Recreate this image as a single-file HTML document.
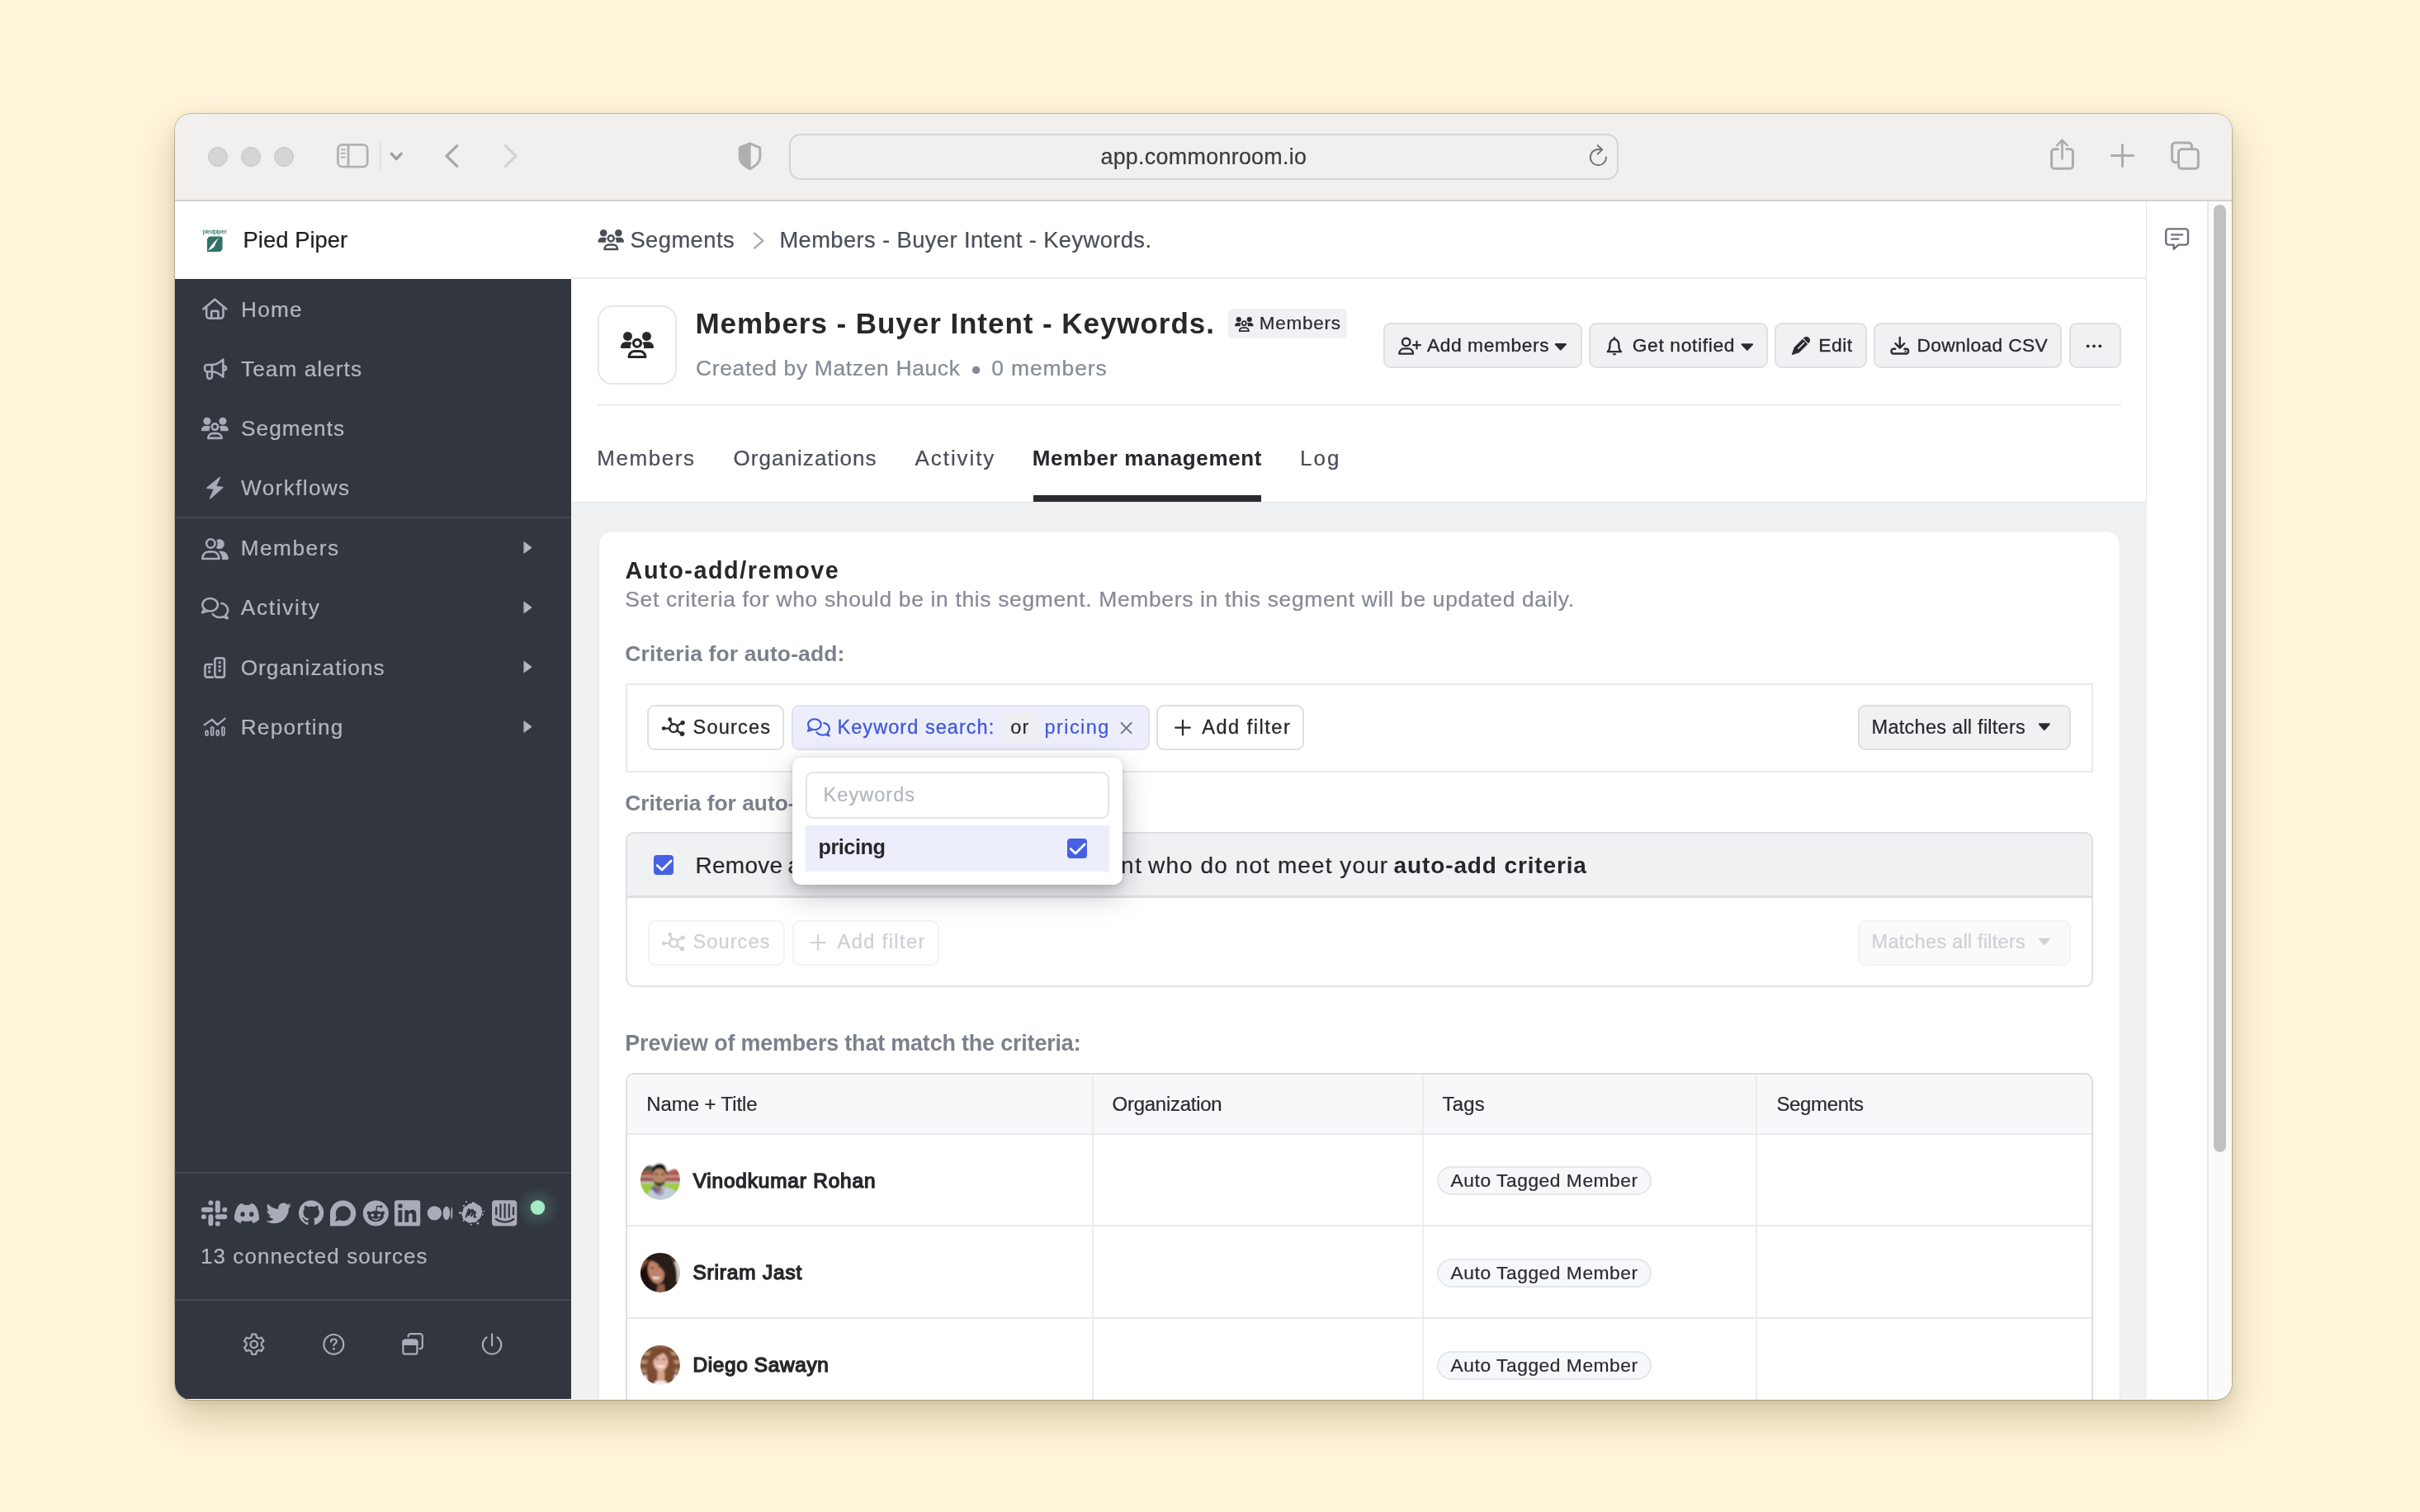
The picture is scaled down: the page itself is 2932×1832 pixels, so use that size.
<!DOCTYPE html>
<html lang="en">
<head>
<meta charset="utf-8">
<title>Members - Buyer Intent - Keywords. | Common Room</title>
<style>
*{box-sizing:border-box;margin:0;padding:0}
html,body{width:2932px;height:1832px;overflow:hidden}
body{background:#fef4d9;font-family:"Liberation Sans",sans-serif;position:relative}
.abs,.t,.win *{position:absolute}
.t{white-space:nowrap;line-height:1em}
.win{position:absolute;left:212px;top:138px;width:2492px;height:1557.5px;border-radius:20px;background:#fff;
 box-shadow:0 0 0 1px rgba(60,45,10,.26),0 22px 44px rgba(80,60,10,.24),0 3px 12px rgba(80,60,10,.10)}
.clip{left:0;top:0;width:2492px;height:1557.5px;border-radius:20px;overflow:hidden}
/* coordinates inside .clip are page coordinates shifted by (-212,-137): use .pg wrapper */
.pg{left:-212px;top:-138px;width:2932px;height:1832px;will-change:transform}
.titlebar{left:212px;top:137px;width:2492px;height:105px;background:#f1f0ee}
.tbline{left:212px;top:242px;width:2492px;height:2px;background:#d3d2d0}
.tl{width:24px;height:24px;border-radius:50%;background:#d6d5d3;border:1px solid #c4c3c1;top:178px}
.url{left:956px;top:162px;width:1005px;height:56px;border-radius:14px;border:2px solid #d6d5d3;background:#f1f0ee}
.sidebar{left:212px;top:338px;width:480px;height:1357px;background:#32363f}
.sdiv{left:212px;width:480px;height:2px;background:#454853}
.hline{background:#ececf0;height:2px}
.graybg{left:692px;top:608px;width:1909px;height:1087px;background:#f0f1f3;border-top:1.6px solid #e7e8ea}
.card{left:725px;top:643.4px;width:1844px;height:1100px;background:#fff;border-radius:16px;border:1.6px solid #e8e9eb}
.btn{height:55px;top:391px;border-radius:9px;background:#f0f1f3;border:2px solid #dedfe3}
.fbtn{height:55px;border-radius:9px;background:#fff;border:2px solid #dfe0e5}
.rail{left:2600.3px;top:244px;width:74px;height:1451px;background:#fff;border-left:1.6px solid #e3e4e8}
.track{left:2674px;top:244px;width:30px;height:1451px;background:#fafafa;border-left:2px solid #e8e8e8}
.thumb{left:2682px;top:248px;width:15px;height:1148px;border-radius:8px;background:#c1c1c1}
.tag{height:35px;border-radius:18px;background:#f7f8fa;border:2px solid #e5e6ea;left:1741px;width:260px}
.av{width:48px;height:48px;border-radius:50%;overflow:hidden;left:776px}
svg{position:absolute;overflow:visible}
</style>
</head>
<body>
<div class="win"><div class="clip"><div class="pg">

<!-- ======= Safari title bar ======= -->
<header class="titlebar"></header>
<div class="tbline"></div>
<div class="tl" style="left:252px"></div>
<div class="tl" style="left:292px"></div>
<div class="tl" style="left:332px"></div>
<div class="url"></div>
<svg style="left:0;top:0" width="2932" height="300" viewBox="0 0 2932 300" fill="none" stroke-linecap="round" stroke-linejoin="round">
  <!-- sidebar toggle -->
  <g stroke="#b3b2b0" stroke-width="2.8">
    <rect x="409.4" y="175.4" width="35.8" height="26.8" rx="5.5"/>
    <path d="M422 175.5V202" stroke-linecap="butt"/>
    <path d="M413.6 181.2h4.2M413.6 185.8h4.2M413.6 190.4h4.2" stroke-width="2"/>
  </g>
  <path d="M460.7 172V207.5" stroke="#dcdbd9" stroke-width="1.6"/>
  <path d="M474.2 186.2l6 6.4 6-6.4" stroke="#9c9b99" stroke-width="3.2"/>
  <path d="M553.8 176.6L541 189l12.8 12.4" stroke="#a9a8a6" stroke-width="3.2"/>
  <path d="M612.4 176.6L625.2 189l-12.8 12.4" stroke="#d4d3d1" stroke-width="3.2"/>
  <!-- shield -->
  <path d="M908.5 172.6c.6 0 1.2.1 1.8.4l9.9 4c1.3.5 2.1 1.7 2.1 3.1v9.600c0 7.600-5.800 12.200-12.600 16-.8.4-1.600.4-2.400 0-6.800-3.800-12.600-8.400-12.600-16v-9.600c0-1.400.8-2.600 2.100-3.100l9.900-4c.6-.3 1.200-.4 1.800-.4z" fill="#b0afad" stroke="none"/>
  <path d="M909.700 176.100l9.600 3.900v9.800c0 5.600-4.200 9.400-9.600 12.700z" fill="#f1f0ee" stroke="none"/>
  <!-- reload -->
  <g stroke="#757472" stroke-width="2">
    <path d="M1946 190.600a9.600 9.600 0 1 1-9.600-9.600h4.200"/>
    <path d="M1935.600 176.200l5.600 5-5.600 5.400"/>
  </g>
  <!-- share -->
  <g stroke="#adacaa" stroke-width="3">
    <path d="M2493.400 180.800h-4.600a3.200 3.200 0 0 0-3.200 3.200v17a3.200 3.200 0 0 0 3.200 3.200h19.400a3.200 3.200 0 0 0 3.200-3.200v-17a3.200 3.200 0 0 0-3.200-3.200h-4.600"/>
    <path d="M2498.500 192.400v-22.600M2492.300 176.200l6.200-6.400 6.200 6.400" stroke-width="2.600"/>
  </g>
  <!-- plus -->
  <path d="M2558.400 188.400h26.200M2571.500 175.400v26.200" stroke="#adacaa" stroke-width="3"/>
  <!-- tabs -->
  <g stroke="#adacaa" stroke-width="3">
    <path d="M2638 196.800h-2.600a3.800 3.800 0 0 1-3.800-3.800v-16.200a3.800 3.800 0 0 1 3.800-3.800h16.200a3.800 3.800 0 0 1 3.800 3.800v2.800"/>
    <rect x="2639.500" y="180.800" width="23.800" height="23.400" rx="3.800"/>
  </g>
</svg>


<!-- ======= App header ======= -->
<div class="hline" style="left:692px;top:336px;width:1909px"></div>
<div class="rail"></div>
<div class="track"></div>
<div class="thumb"></div>

<!-- ======= Sidebar ======= -->
<nav class="sidebar"></nav>
<div class="sdiv" style="top:626px"></div>
<div class="sdiv" style="top:1420px"></div>
<div class="sdiv" style="top:1574px"></div>
<svg style="left:0;top:0" width="2932" height="1832" viewBox="0 0 2932 1832" fill="none" stroke-linecap="round" stroke-linejoin="round">

<g stroke="#a9acb8" stroke-width="2.6">
<path d="M246.300 374.500L260.300 362.700l14 11.800"/>
<path d="M250.100 372.300V382.200a3.600 3.600 0 0 0 3.600 3.600h13.200a3.600 3.600 0 0 0 3.600-3.600V372.300"/>
<path d="M256.200 385.600V378.200a1.300 1.300 0 0 1 1.300-1.300h5.600a1.300 1.300 0 0 1 1.300 1.300V385.600"/>
<path d="M270.300 435.600c-4.200 3.800-8.200 6.400-13.300 6.400h-6.200a2.700 2.700 0 0 0-2.700 2.700v2.800a2.700 2.700 0 0 0 2.700 2.700h6.200c5.100 0 9.100 2.600 13.300 6.400z"/>
<path d="M256.900 442V450.200M251.100 450.400V456a2.900 2.900 0 0 0 5.800 0V450.400"/>
<path d="M271.500 443.600a2.500 2.500 0 0 1 0 5"/>
</g>
<g transform="translate(243.900 505.700) scale(1.0000 1.0000)" fill="none"><circle cx="7" cy="4.500" r="4.500" fill="#a9acb8"/><circle cx="26" cy="4.500" r="4.500" fill="#a9acb8"/><path d="M0 15.400C0 12.300 2.400 10.200 5.300 10.200H8.200c1.300 0 2.300.4 3.100 1-1.300 1.400-1.900 3.200-1.400 5.300H1.100A1.100 1.100 0 0 1 0 15.400z" fill="#a9acb8"/><path d="M33 15.400C33 12.300 30.600 10.200 27.700 10.200H24.800c-1.300 0-2.300.4-3.100 1 1.300 1.400 1.900 3.200 1.400 5.300h8.800A1.100 1.100 0 0 0 33 15.400z" fill="#a9acb8"/><circle cx="16.500" cy="11.400" r="3.700" stroke="#a9acb8" stroke-width="2.600"/><path d="M8.300 25.200c0-3.600 2.800-5.800 5.900-5.800h4.600c3.100 0 5.900 2.200 5.900 5.800z" stroke="#a9acb8" stroke-width="2.600" stroke-linejoin="round"/></g>
<path d="M266.200 578.600L250.800 591.300l8.800 1-4.800 11.300 15-13.100-8.600-1z" fill="#a9acb8" stroke="#a9acb8" stroke-width="1.600"/>
<circle cx="265.800" cy="659.300" r="6" fill="#a9acb8"/>
<circle cx="255.300" cy="658.500" r="8.300" fill="#32363f"/>
<path d="M264.600 667.800c1.300-.1 2.600-.1 3.900-.1 4.600 0 8.200 3.800 8.200 9.200a1.400 1.400 0 0 1-1.400 1.400h-6.300c.5-4.200-1.200-7.800-4.400-10.500z" fill="#a9acb8"/>
<circle cx="255.300" cy="658.500" r="5.200" stroke="#a9acb8" stroke-width="2.600"/>
<path d="M245.200 677c0-5 3.300-8.500 7.300-8.500h5.700c4 0 7.300 3.500 7.300 8.500z" stroke="#a9acb8" stroke-width="2.600" fill="#32363f"/>
<g stroke="#a9acb8" stroke-width="2.500">
<ellipse cx="254.600" cy="732.800" rx="9.300" ry="7.800"/>
<path d="M247.300 738.200L245 742.400l5.400-1.600" fill="#32363f"/>
<path d="M268.200 730.900A9.500 8.500 0 0 1 273.200 745.300M270 747.300A9.700 8.500 0 0 1 257.600 744"/>
<path d="M273.200 745.300L275.800 749.300l-5.800-2"/>
</g>
<g stroke="#a9acb8" stroke-width="2.600">
<rect x="260.400" y="797.400" width="11.500" height="23.200" rx="2.600"/>
<path d="M256.800 805h-6a2.400 2.400 0 0 0-2.400 2.400v10.800a2.400 2.400 0 0 0 2.400 2.400h7"/>
</g>
<rect x="264.6" y="801.2" width="3.100" height="3.100" rx=".6" fill="#a9acb8"/>
<rect x="264.6" y="806.1" width="3.100" height="3.100" rx=".6" fill="#a9acb8"/>
<rect x="264.6" y="811" width="3.100" height="3.100" rx=".6" fill="#a9acb8"/>
<rect x="252.2" y="807.5" width="3.100" height="3.100" rx=".6" fill="#a9acb8"/>
<rect x="252.2" y="812.3" width="3.100" height="3.100" rx=".6" fill="#a9acb8"/>
<path d="M247.700 878.300l9.200-6.400 6.500 6.200 9.200-7.400" stroke="#a9acb8" stroke-width="2.300"/>
<rect x="249.1" y="885.5" width="2.800" height="5.6" rx="1.400" stroke="#a9acb8" stroke-width="1.800"/>
<rect x="255.7" y="880.9" width="2.800" height="10.2" rx="1.400" stroke="#a9acb8" stroke-width="1.800"/>
<rect x="262.3" y="885" width="2.800" height="6.1" rx="1.400" stroke="#a9acb8" stroke-width="1.800"/>
<rect x="269" y="880.9" width="2.800" height="10.2" rx="1.400" stroke="#a9acb8" stroke-width="1.800"/>
<path d="M635.200 656.9L644 663.5l-8.800 6.600z" fill="#b3b6c0" stroke="#b3b6c0" stroke-width="1"/>
<path d="M635.200 729.4L644 736l-8.800 6.600z" fill="#b3b6c0" stroke="#b3b6c0" stroke-width="1"/>
<path d="M635.200 801.4L644 808l-8.800 6.600z" fill="#b3b6c0" stroke="#b3b6c0" stroke-width="1"/>
<path d="M635.200 873.9L644 880.5l-8.800 6.600z" fill="#b3b6c0" stroke="#b3b6c0" stroke-width="1"/>
<g fill="#a9acb8">
<rect x="260.8" y="1454.4" width="6.0" height="15.3" rx="3.0"/>
<rect x="252.4" y="1454.4" width="5.9" height="5.9" rx="2.9"/>
<rect x="243.9" y="1462.8" width="14.4" height="6.0" rx="3.0"/>
<rect x="243.9" y="1471.2" width="6.0" height="6.0" rx="3.0"/>
<rect x="252.4" y="1471.2" width="5.9" height="14.4" rx="3.0"/>
<rect x="260.8" y="1479.7" width="6.0" height="5.9" rx="2.9"/>
<rect x="260.8" y="1471.2" width="14.4" height="6.0" rx="3.0"/>
<rect x="269.2" y="1462.8" width="6.0" height="6.0" rx="3.0"/>
<path d="M291.500 1458.400c2.200-.300 3.800.6 4.600 1.800 2-.300 3.800-.300 5.800 0 .8-1.200 2.400-2.100 4.600-1.800 4.500 2.200 7.300 9.400 7.600 18.600-1.800 2.600-4.600 4.300-7.400 5.200l-1.900-3.100c-3.800 1.300-7.800 1.300-11.600 0l-1.900 3.100c-2.800-.9-5.600-2.600-7.400-5.200.3-9.200 3.100-16.400 7.600-18.600z"/>
<ellipse cx="294" cy="1471.300" rx="2.700" ry="3" fill="#32363f"/><ellipse cx="304.700" cy="1471.300" rx="2.700" ry="3" fill="#32363f"/>
<path transform="translate(322.300 1454.600) scale(.0598)" d="M459.370 151.716c.325 4.548.325 9.097.325 13.645 0 138.720-105.583 298.558-298.558 298.558-59.452 0-114.680-17.219-161.137-47.106 8.447.974 16.568 1.299 25.340 1.299 49.055 0 94.213-16.568 130.274-44.832-46.132-.975-84.792-31.188-98.112-72.772 6.498.974 12.995 1.624 19.818 1.624 9.421 0 18.843-1.300 27.614-3.573-48.081-9.747-84.143-51.980-84.143-102.985v-1.299c13.969 7.797 30.214 12.670 47.431 13.319-28.264-18.843-46.781-51.005-46.781-87.391 0-19.492 5.197-37.360 14.294-52.954 51.655 63.675 129.300 105.258 216.365 109.807-1.624-7.797-2.599-15.918-2.599-24.040 0-57.828 46.782-104.934 104.934-104.934 30.213 0 57.502 12.670 76.670 33.137 23.715-4.548 46.456-13.320 66.599-25.340-7.798 24.366-24.366 44.833-46.132 57.827 21.117-2.273 41.584-8.122 60.426-16.243-14.292 20.791-32.161 39.308-52.628 54.253z"/>
<path transform="translate(361.900 1454.400) scale(1.900)" d="M8 0C3.580 0 0 3.580 0 8c0 3.540 2.290 6.530 5.470 7.590.400.070.550-.170.550-.380 0-.190-.010-.820-.010-1.490-2.010.370-2.530-.490-2.690-.940-.090-.230-.480-.940-.820-1.130-.280-.150-.680-.520-.010-.530.630-.010 1.080.580 1.230.820.720 1.210 1.870.870 2.330.660.070-.520.280-.870.510-1.070-1.780-.200-3.640-.890-3.640-3.950 0-.870.310-1.590.820-2.150-.080-.200-.360-1.020.080-2.120 0 0 .670-.210 2.200.820.640-.180 1.320-.270 2-.270.680 0 1.360.090 2 .270 1.530-1.040 2.200-.820 2.200-.820.440 1.100.160 1.920.080 2.120.510.560.820 1.270.820 2.150 0 3.070-1.870 3.750-3.650 3.950.290.250.540.730.540 1.480 0 1.070-.010 1.930-.010 2.200 0 .210.150.460.550.380A8.013 8.013 0 0 0 16 8c0-4.420-3.580-8-8-8z"/>
<path d="M415.600 1454.400a15.500 15.500 0 0 1 0 31.200H400V1470a15.600 15.600 0 0 1 15.600-15.600z"/>
<path d="M416 1461.200a9 9 0 1 1-4.200 17l-5.800 1.700 1.700-5.600A9 9 0 0 1 416 1461.200z" fill="#32363f"/>
<circle cx="455.300" cy="1470" r="15.500"/>
<g fill="#32363f"><ellipse cx="455.300" cy="1473.600" rx="9.600" ry="6.600"/><circle cx="446.800" cy="1469.800" r="2.300"/><circle cx="463.800" cy="1469.800" r="2.300"/><circle cx="461.800" cy="1462" r="1.700"/></g>
<path d="M455.500 1467.500l1.400-6.200 4.800 1" stroke="#32363f" stroke-width="1.300" fill="none"/>
<circle cx="451.300" cy="1472.300" r="1.900"/><circle cx="459.300" cy="1472.300" r="1.900"/>
<path d="M451.300 1476.300c2.400 1.700 5.600 1.700 8 0" stroke="#a9acb8" stroke-width="1.300" fill="none"/>
<rect x="477.900" y="1454.300" width="31.300" height="31.300" rx="3.200"/>
<g fill="#32363f"><circle cx="484.900" cy="1461.200" r="2.750"/><rect x="482.500" y="1466.300" width="4.800" height="14.500"/><path d="M490.300 1466.300h4.600v2c.9-1.500 2.600-2.500 4.800-2.500 3.600 0 4.600 2.400 4.600 5.900v9.100h-4.800v-8c0-1.700-.4-2.900-2-2.900-1.700 0-2.400 1.200-2.400 2.900v8h-4.800z"/></g>
<circle cx="526.400" cy="1469.900" r="8.650"/><ellipse cx="540.900" cy="1470" rx="4.300" ry="8.200"/><ellipse cx="547.300" cy="1470" rx="1" ry="7.500"/>
<path transform="translate(571.2 1470.3) scale(1.08) translate(-571.2 -1470.3)" d="M571 1459c2.600-1.300 5.600-.6 7.200 1.500 2.300.2 4 2.100 3.800 4.400 1.700 1.800 1.800 4.600.2 6.400.3 2.600-1.200 5-3.600 5.800-1 2.600-3.800 3.900-6.400 3.100-2.400 1.300-5.400.7-7-1.400-2.500-.2-4.300-2.500-3.900-5-1.600-1.900-1.400-4.700.4-6.300-.2-2.600 1.500-4.900 4-5.500 1-1.800 3.200-3 5.300-3z"/>
<circle cx="565" cy="1456.2" r="1.1"/>
<circle cx="573.4" cy="1457.4" r="1.5"/>
<circle cx="562" cy="1461" r="1.2"/>
<circle cx="557.5" cy="1469.4" r="1.5"/>
<circle cx="582.6" cy="1464" r="1.2"/>
<circle cx="586.2" cy="1467.6" r="0.8"/>
<circle cx="584.6" cy="1471.6" r="1.1"/>
<circle cx="561.5" cy="1479.2" r="0.9"/>
<circle cx="570.6" cy="1483.8" r="1.1"/>
<circle cx="579" cy="1482.2" r="1.4"/>
<path d="M564.600 1474.400l3-8.400c.4-1 1.700-.700 1.500.4l-1.500 6 3.800-6c.6-.9 1.900-.4 1.600.6l-1.900 6.200 3-4.800c.7-1 2-.4 1.700.7l-1.200 4.300c-.3 1.200.6 1.600 1.700 1.200" stroke="#32363f" stroke-width="2.100" fill="none"/>
<rect x="596" y="1454.300" width="30.300" height="31.300" rx="4"/>
<g stroke="#32363f" stroke-width="2.200" fill="none"><path d="M601.200 1463v8.500M606.400 1459.600v15M611.600 1459v16.200M616.800 1459.600v15M622 1463v8.500"/><path d="M600.800 1477c6.400 4.800 15.200 4.800 21.600 0"/></g>
</g>
<circle cx="651.500" cy="1463" r="26" fill="url(#glow)"/>
<defs><radialGradient id="glow"><stop offset="0" stop-color="#8be0b0" stop-opacity=".30"/><stop offset=".4" stop-color="#7fd8a8" stop-opacity=".15"/><stop offset="1" stop-color="#7fd8a8" stop-opacity="0"/></radialGradient></defs>
<circle cx="651.500" cy="1463" r="8.700" fill="#a0ecc3"/>
<g stroke="#a9acb8" stroke-width="2.200">
<path d="M304.5 1620.2 L305.3 1616.7 L310.1 1616.7 L310.9 1620.2 L313.5 1621.7 L316.9 1620.7 L319.4 1624.9 L316.8 1627.3 L316.8 1630.3 L319.4 1632.7 L316.9 1636.9 L313.5 1635.9 L310.9 1637.4 L310.1 1640.9 L305.3 1640.9 L304.5 1637.4 L301.9 1635.9 L298.5 1636.9 L296.0 1632.7 L298.6 1630.3 L298.6 1627.3 L296.0 1624.9 L298.5 1620.7 L301.9 1621.7Z" stroke-linejoin="round"/>
<circle cx="307.7" cy="1628.8" r="4.200"/>
<circle cx="404.300" cy="1628.900" r="11.900"/>
<path d="M400.900 1625.700c0-2 1.500-3.200 3.500-3.200s3.400 1.200 3.400 2.900c0 2.600-3.400 2.500-3.400 5.100" stroke-width="2.100"/>
<circle cx="404.400" cy="1634.400" r="1.400" fill="#a9acb8" stroke="none"/>
<path d="M494.600 1619.400v-.4a2.800 2.800 0 0 1 2.800-2.800h11.600a2.800 2.800 0 0 1 2.800 2.800v12.400a2.800 2.800 0 0 1-2.800 2.800h-.6"/>
<rect x="488.400" y="1623.700" width="17" height="17" rx="2.800"/>
<path d="M488.400 1629V1626.500a2.800 2.800 0 0 1 2.800-2.800h11.400a2.800 2.800 0 0 1 2.800 2.800V1629z" fill="#a9acb8"/>
<path d="M596.100 1616.600v13.600M589.600 1620.300a11.200 11.200 0 1 0 13 0"/>
</g>
</svg>

<!-- ======= Page header ======= -->
<div style="left:724px;top:370px;width:96px;height:96px;border-radius:18px;border:2px solid #e7e7ea;background:#fff"></div>
<div style="left:1488px;top:374px;width:144px;height:36px;border-radius:5px;background:#f0f1f3"></div>
<div class="btn" style="left:1676px;width:241px"></div>
<div class="btn" style="left:1925px;width:217px"></div>
<div class="btn" style="left:2150px;width:112px"></div>
<div class="btn" style="left:2270px;width:228px"></div>
<div class="btn" style="left:2507px;width:63px"></div>
<div class="hline" style="left:724px;top:490px;width:1846px"></div>
<div style="left:1252px;top:600px;width:276px;height:8px;background:#2a2b2f"></div>
<svg style="left:0;top:0" width="2932" height="700" viewBox="0 0 2932 700" fill="none" stroke-linecap="round" stroke-linejoin="round">
<path d="M255.400 286.400H268a1.500 1.500 0 0 1 1.500 1.500V300.600a4.500 4.500 0 0 1-4.500 4.500H251.400a.5.500 0 0 1-.5-.5V290.900a4.500 4.500 0 0 1 4.500-4.500z" fill="#2f7168"/>
<path d="M252 303.600C255.500 298 260 291.500 266.400 287.500 262.500 291 261.600 294 260.600 297 259.600 300 256.500 301.800 252 303.600z" fill="#fff"/>
<circle cx="1182.600" cy="448.400" r="4.700" fill="#868a97"/>
<g transform="translate(724.500 278) scale(0.9545 0.9556)" fill="none"><circle cx="7" cy="4.500" r="4.500" fill="#4b4e59"/><circle cx="26" cy="4.500" r="4.500" fill="#4b4e59"/><path d="M0 15.400C0 12.300 2.400 10.200 5.300 10.200H8.200c1.300 0 2.300.4 3.100 1-1.300 1.400-1.900 3.200-1.400 5.300H1.100A1.100 1.100 0 0 1 0 15.400z" fill="#4b4e59"/><path d="M33 15.400C33 12.300 30.600 10.200 27.700 10.200H24.800c-1.300 0-2.300.4-3.100 1 1.300 1.400 1.900 3.200 1.400 5.300h8.800A1.100 1.100 0 0 0 33 15.400z" fill="#4b4e59"/><circle cx="16.500" cy="11.400" r="3.700" stroke="#4b4e59" stroke-width="2.600"/><path d="M8.300 25.200c0-3.600 2.800-5.800 5.900-5.800h4.600c3.100 0 5.900 2.200 5.900 5.800z" stroke="#4b4e59" stroke-width="2.600" stroke-linejoin="round"/></g>
<path d="M914 282.600l10.400 9-10.400 9" stroke="#a3a6b2" stroke-width="2.200"/>
<path d="M2627.400 277.400h20.400a3.200 3.200 0 0 1 3.200 3.200v12.800a3.200 3.200 0 0 1-3.200 3.200h-8.600l-5.600 5.200v-5.200h-6.200a3.200 3.200 0 0 1-3.200-3.200v-12.800a3.200 3.200 0 0 1 3.200-3.200z" stroke="#6d717e" stroke-width="2.400"/>
<path d="M2631 284.400h13.200M2631 289.600h8.400" stroke="#6d717e" stroke-width="2.200"/>
<g transform="translate(752 402) scale(1.2121 1.2111)" fill="none"><circle cx="7" cy="4.500" r="4.500" fill="#27282b"/><circle cx="26" cy="4.500" r="4.500" fill="#27282b"/><path d="M0 15.400C0 12.300 2.400 10.200 5.300 10.200H8.200c1.300 0 2.300.4 3.100 1-1.300 1.400-1.900 3.200-1.400 5.300H1.100A1.100 1.100 0 0 1 0 15.400z" fill="#27282b"/><path d="M33 15.400C33 12.300 30.600 10.200 27.700 10.200H24.800c-1.300 0-2.300.4-3.100 1 1.300 1.400 1.900 3.200 1.400 5.300h8.800A1.100 1.100 0 0 0 33 15.400z" fill="#27282b"/><circle cx="16.500" cy="11.400" r="3.700" stroke="#27282b" stroke-width="2.600"/><path d="M8.300 25.200c0-3.600 2.800-5.800 5.900-5.800h4.600c3.100 0 5.900 2.200 5.900 5.800z" stroke="#27282b" stroke-width="2.600" stroke-linejoin="round"/></g>
<g transform="translate(1496 383.900) scale(0.6848 0.6852)" fill="none"><circle cx="7" cy="4.500" r="4.500" fill="#2b2c30"/><circle cx="26" cy="4.500" r="4.500" fill="#2b2c30"/><path d="M0 15.400C0 12.300 2.400 10.200 5.300 10.200H8.200c1.300 0 2.300.4 3.100 1-1.300 1.400-1.900 3.200-1.400 5.300H1.100A1.100 1.100 0 0 1 0 15.400z" fill="#2b2c30"/><path d="M33 15.400C33 12.300 30.600 10.200 27.700 10.200H24.800c-1.300 0-2.300.4-3.100 1 1.300 1.400 1.900 3.200 1.400 5.300h8.800A1.100 1.100 0 0 0 33 15.400z" fill="#2b2c30"/><circle cx="16.500" cy="11.400" r="3.700" stroke="#2b2c30" stroke-width="2.600"/><path d="M8.300 25.200c0-3.600 2.800-5.800 5.900-5.800h4.600c3.100 0 5.900 2.200 5.900 5.800z" stroke="#2b2c30" stroke-width="2.600" stroke-linejoin="round"/></g>
<g stroke="#2b2c30" stroke-width="2.400"><circle cx="1703.700" cy="414.400" r="4.700"/><path d="M1695.400 428.600c0-4 2.900-6.200 5.900-6.200h4.800c3 0 5.900 2.200 5.900 6.200z"/><path d="M1716.500 413.700v8.800M1712.100 418.100h8.800" stroke-width="2.200"/></g>
<path d="M1884.8 417.1H1896.9L1890.8 423.6z" fill="#2b2c30" stroke="#2b2c30" stroke-width="2" stroke-linejoin="round"/>
<g stroke="#2b2c30" stroke-width="2.300"><path d="M1955.900 409.200v1.800"/><path d="M1947.800 426.200c1.800-1.700 2.700-3.700 2.700-7.200v-1.400c0-3.700 2.400-6.400 5.400-6.400s5.400 2.700 5.400 6.400v1.400c0 3.500.9 5.500 2.700 7.200z"/></g>
<path d="M1953.700 428.300a2.200 2.200 0 0 0 4.400 0z" fill="#2b2c30"/>
<path d="M2110.6 417.3H2123.1L2116.9 423.7z" fill="#2b2c30" stroke="#2b2c30" stroke-width="2" stroke-linejoin="round"/>
<g transform="translate(2171.300 429.600) rotate(-45)"><path d="M0 0L8 -3.900H24.500a3.900 3.900 0 0 1 0 7.800H8z" fill="#2b2c30" stroke="#2b2c30" stroke-width="1"/><path d="M10.500 0H20" stroke="#f0f1f3" stroke-width="1.500"/><path d="M22.800 -4.600V4.600" stroke="#f0f1f3" stroke-width="1.100"/></g>
<g stroke="#2b2c30" stroke-width="2.400"><path d="M2301.800 409v12.400M2296.400 416.200l5.400 5.400 5.400-5.400"/><path d="M2296.200 422.800h-2.300a2.300 2.300 0 0 0-2.300 2.300v1.100a2.300 2.300 0 0 0 2.300 2.300h15.800a2.300 2.300 0 0 0 2.300-2.300v-1.100a2.300 2.300 0 0 0-2.300-2.300h-2.300"/></g>
<circle cx="2308.600" cy="425.700" r="1.100" fill="#2b2c30"/>
<circle cx="2529.7" cy="419.300" r="1.900" fill="#2b2c30"/>
<circle cx="2537" cy="419.300" r="1.900" fill="#2b2c30"/>
<circle cx="2544.3" cy="419.300" r="1.900" fill="#2b2c30"/>
</svg>

<!-- ======= Content ======= -->
<main class="graybg"></main>
<section class="card"></section>
<!-- criteria box 1 -->
<div style="left:758px;top:828px;width:1778px;height:108px;border:2px solid #e8e9ec;background:#fff"></div>
<div class="fbtn" style="left:784.3px;top:854.3px;width:166.2px"></div>
<div class="fbtn" style="left:959.4px;top:854.3px;width:433.3px;background:#eceefb;border-color:#dfe2f4"></div>
<div style="left:1214px;top:865px;width:44px;height:35px;border-radius:7px;background:#eeeff1"></div>
<div class="fbtn" style="left:1401.4px;top:854.3px;width:178.9px"></div>
<div class="fbtn" style="left:2250.6px;top:854.3px;width:258.8px;background:#f0f1f3;border-color:#dddee2"></div>
<!-- criteria box 2 -->
<div style="left:758px;top:1008px;width:1778px;height:188px;border:2px solid #e0e1e5;background:#fff;border-radius:10px"></div>
<div style="left:758px;top:1008px;width:1778px;height:80px;border:2px solid #dfe0e4;background:#f0f1f3;border-radius:10px 10px 0 0;border-bottom:3px solid #dfe0e4"></div>
<div style="left:792px;top:1036px;width:24px;height:24px;border-radius:4px;background:#4760e4"></div>
<div class="fbtn" style="left:785.3px;top:1114.7px;width:165.4px;border-color:#f3f3f5"></div>
<div class="fbtn" style="left:960.3px;top:1114.7px;width:177.3px;border-color:#f3f3f5"></div>
<div class="fbtn" style="left:2250.6px;top:1114.7px;width:258.8px;background:#fafafb;border-color:#f3f3f5"></div>
<!-- table -->
<div style="left:758px;top:1300px;width:1778px;height:500px;border:2px solid #dddee2;border-radius:10px;background:#fff;overflow:hidden">
  <div style="left:0;top:0;width:1778px;height:71px;background:#f7f8fa"></div>
  <div style="left:0;top:71px;width:1778px;height:2px;background:#e9eaed"></div>
  <div style="left:0;top:182px;width:1778px;height:2px;background:#e9eaed"></div>
  <div style="left:0;top:294px;width:1778px;height:2px;background:#e9eaed"></div>
  <div style="left:562.7px;top:0;width:2px;height:500px;background:#ececef"></div>
  <div style="left:962.6px;top:0;width:2px;height:500px;background:#ececef"></div>
  <div style="left:1366.6px;top:0;width:2px;height:500px;background:#ececef"></div>
</div>
<div class="tag" style="top:1413px"></div>
<div class="tag" style="top:1525px"></div>
<div class="tag" style="top:1637px"></div>
<svg style="left:0;top:0" width="2932" height="1832" viewBox="0 0 2932 1832">
<defs>
<filter id="bl" x="-10%" y="-10%" width="120%" height="120%"><feGaussianBlur stdDeviation="0.9"/></filter>
<clipPath id="a1"><circle cx="799.900" cy="1429.900" r="24"/></clipPath>
<clipPath id="a2"><circle cx="799.900" cy="1541.900" r="24"/></clipPath>
<clipPath id="a3"><circle cx="799.900" cy="1653.900" r="24"/></clipPath>
</defs>
<!-- avatar 1 : man in front of lawn and brick buildings -->
<g clip-path="url(#a1)"><g filter="url(#bl)">
<rect x="774" y="1404" width="52" height="52" fill="#ffffff"/>
<path d="M776 1421c3-6 6-9 10-9s6 1 8 3l2 6z" fill="#4d5b4c"/>
<rect x="774" y="1419" width="52" height="14" fill="#a4564c"/>
<path d="M808 1420l6-3 5-1 5 4v13h-16z" fill="#b25c50"/>
<rect x="774" y="1424.500" width="52" height="1.600" fill="#d9c6c0" opacity=".8"/>
<rect x="774" y="1428.800" width="52" height="1.400" fill="#7c6a70" opacity=".7"/>
<rect x="774" y="1431.600" width="52" height="2.600" fill="#c9cccb"/>
<rect x="774" y="1433.800" width="52" height="14" fill="#9dcc3e"/>
<path d="M781 1456c1-9 5-13 11-15l6-4 8 1c7 2 13 4 16 9l2 9z" fill="#c3ccd8"/>
<path d="M788.500 1439.500l4-3.500 4 4 1.500 8-4-2.500z" fill="#6d5fa0"/>
<path d="M805.500 1436.500l-3 5.500-5.500 8 6-3.500z" fill="#8f86bd"/>
<path d="M795.500 1438l3 9 4-8z" fill="#9a6a50"/>
<ellipse cx="798.800" cy="1424.800" rx="8.300" ry="11.600" fill="#b98967"/>
<path d="M790.200 1424c-1.200-9.500 2.800-14.200 8.800-14.200s10 4.600 8.200 14c-1.600-5.400-4.200-8-8.400-8s-6.800 2.400-8.600 8.200z" fill="#17130f"/>
<path d="M791 1429.500c1.400 6 4.600 8.600 7.800 8.600s6.600-2.600 7.800-8.600c-2.200 2.800-4.600 3.400-7.800 3.400s-5.400-.6-7.800-3.400z" fill="#4d3b31"/>
<ellipse cx="795.200" cy="1422.800" rx="1.900" ry="1" fill="#3a2a22"/><ellipse cx="802.600" cy="1422.800" rx="1.900" ry="1" fill="#3a2a22"/>
</g></g>
<!-- avatar 2 : woman, long dark hair, head tilted -->
<g clip-path="url(#a2)"><g filter="url(#bl)">
<rect x="774" y="1516" width="52" height="52" fill="#251714"/>
<rect x="815.500" y="1528" width="9" height="25" rx="3" fill="#d3cbc4"/>
<rect x="812" y="1520" width="6" height="9" fill="#5a4a2c"/>
<path d="M776 1534c1 8 3 14 6 18l3-26c-4 1-7 4-9 8z" fill="#8a5a34"/>
<g transform="rotate(-14 795 1541)"><ellipse cx="795" cy="1540.500" rx="9.700" ry="15" fill="#bd8267"/></g>
<path d="M797 1556h8l1 12h-11z" fill="#8f5d4a"/>
<path d="M789 1522c6-5 16-5 22 0 7 6 10 18 9 30l-2 16h-10c2-12 0-22-6-30-3-5-7-9-13-10z" fill="#2a1a16"/>
<path d="M786 1529c-2 8-2 18 1 28l-3 10h-9v-22c2-8 6-13 11-16z" fill="#1c1110"/>
<path d="M790.600 1547.200c2.400 2.600 5.400 2.800 7.800.8-2.200.4-5.400.2-7.800-.8z" fill="#fff" stroke="#f3e9e6" stroke-width="1.300"/>
<ellipse cx="790.500" cy="1536.400" rx="1.800" ry="1" fill="#2a1a18"/><ellipse cx="799" cy="1534.600" rx="1.800" ry="1" fill="#2a1a18"/>
</g></g>
<!-- avatar 3 : woman, wavy brown hair, brick wall -->
<g clip-path="url(#a3)"><g filter="url(#bl)">
<rect x="774" y="1628" width="52" height="52" fill="#96684b"/>
<rect x="774" y="1633" width="52" height="2.600" fill="#6b4633"/><rect x="774" y="1639" width="52" height="2.400" fill="#c9a27c"/><rect x="774" y="1643.500" width="52" height="2.600" fill="#6b4633"/>
<rect x="774" y="1649" width="52" height="2.400" fill="#c4a07e"/><rect x="774" y="1654" width="52" height="2.600" fill="#6b4633"/><rect x="774" y="1660" width="52" height="2.400" fill="#b99674"/><rect x="774" y="1665" width="52" height="2.600" fill="#6b4633"/>
<path d="M779 1668c3-3 7-3 10-1l1 13h-14z" fill="#f0e3e8"/>
<path d="M814 1667c3-2 6-2 9 0l2 8-10 3z" fill="#e4dcf0"/>
<path d="M785 1676c-3-14-2-30 4-38 3-4 7-6 11-6s9 2 12 6c6 8 7 24 3 38-2 2-6 3-9 3h-14c-3 0-5-1-7-3z" fill="#7d4c32"/>
<path d="M792 1680c0-6 3-8 8.500-8s8.500 2 8.500 8z" fill="#f4e8ea"/>
<rect x="796.500" y="1660" width="8.600" height="13" rx="2" fill="#d3a48b"/>
<ellipse cx="800.400" cy="1649.800" rx="9" ry="11.600" fill="#e2b4a2"/>
<path d="M790.800 1650c-1.400-10 2.600-15.600 9.600-15.600 4 0 7.600 2 9 6 .8 3 .8 6 .4 9.600-1.400-5.600-3.400-9-6.400-10.800-4 2.600-9.400 4.400-12.600 10.800z" fill="#7a4a30"/>
<path d="M795.800 1654.600c2.400 2.400 6.800 2.400 9.200 0-2.200.8-7 .8-9.200 0z" fill="#fff" stroke="#fbf1ee" stroke-width="1.400"/>
<ellipse cx="796.400" cy="1646.600" rx="1.700" ry=".9" fill="#5a4038"/><ellipse cx="804.400" cy="1646.600" rx="1.700" ry=".9" fill="#5a4038"/>
</g></g>
</svg>

<svg style="left:0;top:0" width="2932" height="1832" viewBox="0 0 2932 1832" fill="none" stroke-linecap="round" stroke-linejoin="round">
<g transform="translate(0.0 0.0)" stroke="#2b2c30" fill="#2b2c30" stroke-width="2.200">
<path d="M804.100 882.600H811M811.600 871.700l2.600 6.200M827.100 875.700l-7.200 3.800M826.500 889.200l-6.800-4.200" fill="none"/>
<circle cx="816.200" cy="882.200" r="4.900" fill="none" stroke-width="2.400"/>
<circle cx="804.100" cy="882.600" r="1.300"/><circle cx="811.600" cy="871.700" r="1.300"/><circle cx="827.100" cy="875.700" r="1.600"/><circle cx="826.500" cy="889.200" r="1.800"/></g>
<g transform="translate(977.9 870.1) scale(0.84) translate(-243.900 -723.700)" stroke="#4058d9" stroke-width="2.5" fill="none">
<ellipse cx="254.600" cy="732.800" rx="9.300" ry="7.800"/>
<path d="M247.300 738.200L245 742.400l5.400-1.600" fill="#eceefb"/>
<path d="M268.200 730.900A9.500 8.500 0 0 1 273.200 745.300M270 747.300A9.700 8.500 0 0 1 257.600 744"/>
<path d="M273.200 745.300L275.800 749.300l-5.800-2"/></g>
<path d="M1358.600 876l12 12.300M1370.600 876l-12 12.300" stroke="#70747f" stroke-width="1.900"/>
<path d="M1424.200 881.700h17.600M1433 872.900v17.600" stroke="#2b2c30" stroke-width="2.200"/>
<path d="M2470.9 877.3H2482.8L2476.8 884.0z" fill="#2b2c30" stroke="#2b2c30" stroke-width="2" stroke-linejoin="round"/>
<path d="M796.2 1048.6l5.800 5.400 11.200-10.900" stroke="#fff" stroke-width="2.800" fill="none" stroke-linecap="round" stroke-linejoin="round"/>
<g transform="translate(0.0 260.4)" stroke="#d2d3d7" fill="#d2d3d7" stroke-width="2.200">
<path d="M804.100 882.600H811M811.600 871.700l2.600 6.200M827.100 875.700l-7.200 3.800M826.500 889.200l-6.800-4.200" fill="none"/>
<circle cx="816.200" cy="882.200" r="4.900" fill="none" stroke-width="2.400"/>
<circle cx="804.100" cy="882.600" r="1.300"/><circle cx="811.600" cy="871.700" r="1.300"/><circle cx="827.100" cy="875.700" r="1.600"/><circle cx="826.500" cy="889.200" r="1.800"/></g>
<path d="M982.200 1142.100h17.600M991 1133.300v17.600" stroke="#d2d3d7" stroke-width="2.200"/>
<path d="M2470.9 1137.7H2482.8L2476.8 1144.4z" fill="#d2d3d7" stroke="#d2d3d7" stroke-width="2" stroke-linejoin="round"/>
</svg>
<div class="t" style="left:1333.4px;top:176.7px;font-size:26.89px;letter-spacing:0.29px;color:#3b3b3b;-webkit-text-stroke:0.22px #3b3b3b">app.commonroom.io</div>
<div class="t" style="left:245.5px;top:277.2px;font-size:7.41px;letter-spacing:-0.15px;color:#2f7267;-webkit-text-stroke:0.15px #2f7267">piedpiper</div>
<div class="t" style="left:294.6px;top:276.9px;font-size:27.33px;letter-spacing:0.05px;color:#1f2023;-webkit-text-stroke:0.22px #1f2023">Pied Piper</div>
<div class="t" style="left:763.4px;top:276.9px;font-size:27.33px;letter-spacing:0.46px;color:#4b4e59;-webkit-text-stroke:0.22px #4b4e59">Segments</div>
<div class="t" style="left:944.4px;top:276.9px;font-size:27.33px;letter-spacing:0.40px;color:#4b4e59;-webkit-text-stroke:0.22px #4b4e59">Members - Buyer Intent - Keywords.</div>
<div class="t" style="left:292.1px;top:361.9px;font-size:26.16px;letter-spacing:1.21px;color:#b3b6c0;-webkit-text-stroke:0.22px #b3b6c0">Home</div>
<div class="t" style="left:292.1px;top:433.9px;font-size:26.16px;letter-spacing:1.07px;color:#b3b6c0;-webkit-text-stroke:0.22px #b3b6c0">Team alerts</div>
<div class="t" style="left:292.1px;top:505.9px;font-size:26.16px;letter-spacing:1.02px;color:#b3b6c0;-webkit-text-stroke:0.22px #b3b6c0">Segments</div>
<div class="t" style="left:292.1px;top:577.9px;font-size:26.16px;letter-spacing:1.37px;color:#b3b6c0;-webkit-text-stroke:0.22px #b3b6c0">Workflows</div>
<div class="t" style="left:291.7px;top:651.4px;font-size:26.16px;letter-spacing:1.55px;color:#b3b6c0;-webkit-text-stroke:0.22px #b3b6c0">Members</div>
<div class="t" style="left:291.7px;top:723.4px;font-size:26.16px;letter-spacing:1.75px;color:#b3b6c0;-webkit-text-stroke:0.22px #b3b6c0">Activity</div>
<div class="t" style="left:291.7px;top:795.9px;font-size:26.16px;letter-spacing:1.04px;color:#b3b6c0;-webkit-text-stroke:0.22px #b3b6c0">Organizations</div>
<div class="t" style="left:291.7px;top:867.9px;font-size:26.16px;letter-spacing:1.27px;color:#b3b6c0;-webkit-text-stroke:0.22px #b3b6c0">Reporting</div>
<div class="t" style="left:243.0px;top:1510.1px;font-size:25.87px;letter-spacing:1.13px;color:#b3b6c0;-webkit-text-stroke:0.22px #b3b6c0">13 connected sources</div>
<div class="t" style="left:842.5px;top:374.0px;font-size:35.03px;letter-spacing:0.94px;color:#27282b;font-weight:700">Members - Buyer Intent - Keywords.</div>
<div class="t" style="left:1525.8px;top:381.2px;font-size:22.53px;letter-spacing:0.73px;color:#2b2c30;-webkit-text-stroke:0.22px #2b2c30">Members</div>
<div class="t" style="left:843.0px;top:433.2px;font-size:26.45px;letter-spacing:0.65px;color:#868a97;-webkit-text-stroke:0.22px #868a97">Created by Matzen Hauck</div>
<div class="t" style="left:1201.2px;top:433.2px;font-size:26.45px;letter-spacing:0.91px;color:#868a97;-webkit-text-stroke:0.22px #868a97">0 members</div>
<div class="t" style="left:1728.9px;top:406.7px;font-size:22.82px;letter-spacing:0.57px;color:#27282b;-webkit-text-stroke:0.3px #27282b">Add members</div>
<div class="t" style="left:1977.7px;top:406.7px;font-size:22.82px;letter-spacing:0.64px;color:#27282b;-webkit-text-stroke:0.3px #27282b">Get notified</div>
<div class="t" style="left:2203.2px;top:406.7px;font-size:22.82px;letter-spacing:0.56px;color:#27282b;-webkit-text-stroke:0.3px #27282b">Edit</div>
<div class="t" style="left:2322.4px;top:406.7px;font-size:22.82px;letter-spacing:0.33px;color:#27282b;-webkit-text-stroke:0.3px #27282b">Download CSV</div>
<div class="t" style="left:723.2px;top:541.8px;font-size:26.02px;letter-spacing:1.55px;color:#4b4e59;-webkit-text-stroke:0.22px #4b4e59">Members</div>
<div class="t" style="left:888.4px;top:541.8px;font-size:26.02px;letter-spacing:1.06px;color:#4b4e59;-webkit-text-stroke:0.22px #4b4e59">Organizations</div>
<div class="t" style="left:1108.6px;top:541.8px;font-size:26.02px;letter-spacing:1.91px;color:#4b4e59;-webkit-text-stroke:0.22px #4b4e59">Activity</div>
<div class="t" style="left:1250.8px;top:541.8px;font-size:26.02px;letter-spacing:0.64px;color:#27282b;font-weight:700">Member management</div>
<div class="t" style="left:1574.9px;top:541.8px;font-size:26.02px;letter-spacing:2.10px;color:#4b4e59;-webkit-text-stroke:0.22px #4b4e59">Log</div>
<div class="t" style="left:757.6px;top:677.1px;font-size:28.78px;letter-spacing:1.55px;color:#27282b;font-weight:700">Auto-add/remove</div>
<div class="t" style="left:757.3px;top:713.2px;font-size:26.45px;letter-spacing:0.66px;color:#868a97;-webkit-text-stroke:0.22px #868a97">Set criteria for who should be in this segment. Members in this segment will be updated daily.</div>
<div class="t" style="left:757.3px;top:779.3px;font-size:26.45px;letter-spacing:0.15px;color:#7c808c;font-weight:700">Criteria for auto-add:</div>
<div class="t" style="left:839.6px;top:869.7px;font-size:23.55px;letter-spacing:1.19px;color:#27282b;-webkit-text-stroke:0.3px #27282b">Sources</div>
<div class="t" style="left:1014.5px;top:869.7px;font-size:23.55px;letter-spacing:1.03px;color:#4058d9;-webkit-text-stroke:0.3px #4058d9">Keyword search:</div>
<div class="t" style="left:1224.3px;top:869.7px;font-size:23.55px;letter-spacing:1.22px;color:#2b2c30;-webkit-text-stroke:0.22px #2b2c30">or</div>
<div class="t" style="left:1265.6px;top:869.7px;font-size:23.55px;letter-spacing:1.38px;color:#4058d9;-webkit-text-stroke:0.22px #4058d9">pricing</div>
<div class="t" style="left:1456.3px;top:869.7px;font-size:23.55px;letter-spacing:1.51px;color:#27282b;-webkit-text-stroke:0.3px #27282b">Add filter</div>
<div class="t" style="left:2267.6px;top:869.7px;font-size:23.55px;letter-spacing:0.24px;color:#27282b;-webkit-text-stroke:0.22px #27282b">Matches all filters</div>
<div class="t" style="left:757.3px;top:959.6px;font-size:26.45px;letter-spacing:-0.05px;color:#7c808c;font-weight:700">Criteria for auto-remove:</div>
<div class="t" style="left:842.5px;top:1034.8px;font-size:28.05px;letter-spacing:0.23px;color:#27282b;-webkit-text-stroke:0.22px #27282b">Remove</div>
<div class="t" style="left:954.6px;top:1034.8px;font-size:28.05px;letter-spacing:1.61px;color:#27282b;-webkit-text-stroke:0.22px #27282b">all members from this segment</div>
<div class="t" style="left:1391.1px;top:1034.8px;font-size:28.05px;letter-spacing:1.07px;color:#27282b;-webkit-text-stroke:0.22px #27282b">who do not meet your</div>
<div class="t" style="left:1688.6px;top:1034.8px;font-size:28.05px;letter-spacing:0.85px;color:#27282b;font-weight:700">auto-add criteria</div>
<div class="t" style="left:839.5px;top:1130.0px;font-size:23.55px;letter-spacing:1.09px;color:#d0d0d4;-webkit-text-stroke:0.3px #d0d0d4">Sources</div>
<div class="t" style="left:1014.5px;top:1130.0px;font-size:23.55px;letter-spacing:1.44px;color:#d0d0d4;-webkit-text-stroke:0.3px #d0d0d4">Add filter</div>
<div class="t" style="left:2267.6px;top:1130.0px;font-size:23.55px;letter-spacing:0.24px;color:#d0d0d4;-webkit-text-stroke:0.22px #d0d0d4">Matches all filters</div>
<div class="t" style="left:757.3px;top:1251.4px;font-size:26.89px;letter-spacing:-0.15px;color:#7c808c;font-weight:700">Preview of members that match the criteria:</div>
<div class="t" style="left:783.3px;top:1325.7px;font-size:23.98px;letter-spacing:-0.08px;color:#2b2c30;-webkit-text-stroke:0.22px #2b2c30">Name + Title</div>
<div class="t" style="left:1347.6px;top:1325.7px;font-size:23.98px;letter-spacing:-0.26px;color:#2b2c30;-webkit-text-stroke:0.22px #2b2c30">Organization</div>
<div class="t" style="left:1747.6px;top:1325.7px;font-size:23.98px;letter-spacing:0.15px;color:#2b2c30;-webkit-text-stroke:0.22px #2b2c30">Tags</div>
<div class="t" style="left:2152.4px;top:1325.7px;font-size:23.98px;letter-spacing:-0.33px;color:#2b2c30;-webkit-text-stroke:0.22px #2b2c30">Segments</div>
<div class="t" style="left:839.7px;top:1418.5px;font-size:24.42px;letter-spacing:0.82px;color:#27282b;-webkit-text-stroke:1.4px #27282b">Vinodkumar Rohan</div>
<div class="t" style="left:839.4px;top:1530.2px;font-size:24.42px;letter-spacing:0.86px;color:#27282b;-webkit-text-stroke:1.4px #27282b">Sriram Jast</div>
<div class="t" style="left:839.4px;top:1642.1px;font-size:24.42px;letter-spacing:0.65px;color:#27282b;-webkit-text-stroke:1.4px #27282b">Diego Sawayn</div>
<div class="t" style="left:1757.6px;top:1418.7px;font-size:22.82px;letter-spacing:0.52px;color:#2b2c30;-webkit-text-stroke:0.22px #2b2c30">Auto Tagged Member</div>
<div class="t" style="left:1757.6px;top:1530.7px;font-size:22.82px;letter-spacing:0.52px;color:#2b2c30;-webkit-text-stroke:0.22px #2b2c30">Auto Tagged Member</div>
<div class="t" style="left:1757.6px;top:1642.7px;font-size:22.82px;letter-spacing:0.52px;color:#2b2c30;-webkit-text-stroke:0.22px #2b2c30">Auto Tagged Member</div>

<!-- ======= Keyword popup ======= -->
<div style="left:960px;top:918px;width:400px;height:154px;border-radius:10px;background:#fff;box-shadow:0 0 0 1px rgba(0,0,0,.03),0 12px 34px rgba(20,20,30,.26),0 3px 9px rgba(20,20,30,.13)"></div>
<div style="left:976px;top:935px;width:368px;height:57px;border-radius:9px;border:2px solid #e3e4e8;background:#fff"></div>
<div style="left:976px;top:1000px;width:368px;height:56px;background:#eceefb"></div>
<div style="left:1293px;top:1016px;width:24px;height:24px;border-radius:4px;background:#4760e4"></div>
<svg style="left:0;top:0" width="2932" height="1832" viewBox="0 0 2932 1832" fill="none">
<path d="M1297.2 1028.6l5.800 5.400 11.200-10.900" stroke="#fff" stroke-width="2.800" fill="none" stroke-linecap="round" stroke-linejoin="round"/>
</svg>
<div class="t" style="left:997.6px;top:951.8px;font-size:23.55px;letter-spacing:1.01px;color:#b3b6bf;-webkit-text-stroke:0.22px #b3b6bf">Keywords</div>
<div class="t" style="left:991.5px;top:1013.8px;font-size:25.29px;letter-spacing:-0.49px;color:#27282b;font-weight:700">pricing</div>

</div></div></div>
</body>
</html>
